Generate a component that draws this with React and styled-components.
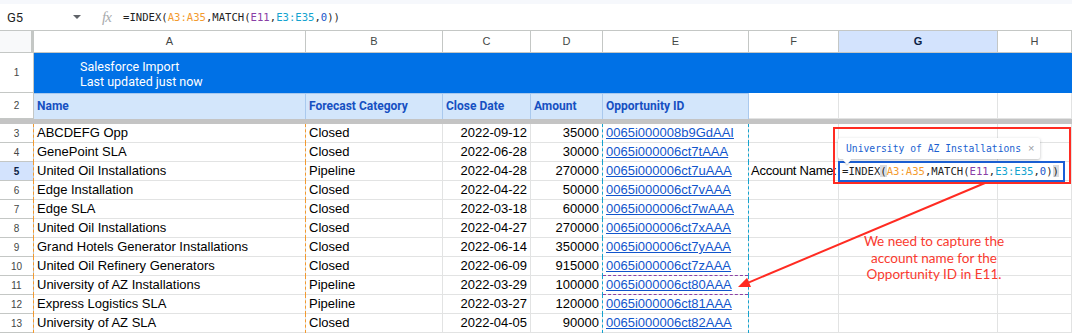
import React from 'react';
import styled, { createGlobalStyle, css } from 'styled-components';

const COLS = '34px 272px 137px 88px 72px 146px 90px 159px 1fr';
const MONO = '"DejaVu Sans Mono", "Liberation Mono", monospace';

const ORANGE = '#f39a2e';
const CYAN = '#13a3cf';
const PURPLE = '#8a3fa6';
const RED = '#ff2b22';

const rows = [
    ['ABCDEFG Opp', 'Closed', '2022-09-12', '35000', '0065i000008b9GdAAI'],
    ['GenePoint SLA', 'Closed', '2022-06-28', '30000', '0065i000006ct7tAAA'],
    ['United Oil Installations', 'Pipeline', '2022-04-28', '270000', '0065i000006ct7uAAA'],
    ['Edge Installation', 'Closed', '2022-04-22', '50000', '0065i000006ct7vAAA'],
    ['Edge SLA', 'Closed', '2022-03-18', '60000', '0065i000006ct7wAAA'],
    ['United Oil Installations', 'Closed', '2022-04-27', '270000', '0065i000006ct7xAAA'],
    ['Grand Hotels Generator Installations', 'Closed', '2022-06-14', '350000', '0065i000006ct7yAAA'],
    ['United Oil Refinery Generators', 'Closed', '2022-06-09', '915000', '0065i000006ct7zAAA'],
    ['University of AZ Installations', 'Pipeline', '2022-03-29', '100000', '0065i000006ct80AAA'],
    ['Express Logistics SLA', 'Pipeline', '2022-03-27', '120000', '0065i000006ct81AAA'],
    ['University of AZ SLA', 'Closed', '2022-04-05', '90000', '0065i000006ct82AAA'],
];

const letters = ['A', 'B', 'C', 'D', 'E', 'F', 'G', 'H'];

const Formula = () => (
    <>
        =INDEX<Paren>(</Paren>
        <Ref $c={ORANGE}>A3:A35</Ref>,MATCH(<Ref $c={PURPLE}>E11</Ref>,<Ref $c={CYAN}>E3:E35</Ref>,
        <Ref $c="#1a56c9">0</Ref>)<Paren>)</Paren>
    </>
);

const BarFormula = () => (
    <>
        =INDEX(<Ref $c={ORANGE}>A3:A35</Ref>,MATCH(<Ref $c={PURPLE}>E11</Ref>,<Ref $c={CYAN}>E3:E35</Ref>,
        <Ref $c="#1a56c9">0</Ref>))
    </>
);

export default function App() {
    return (
        <Page>
            <GlobalStyle />
            <FormulaBar>
                <NameBox>G5</NameBox>
                <Caret />
                <Fx>fx</Fx>
                <BarText>
                    <BarFormula />
                </BarText>
            </FormulaBar>

            <Row $h={22}>
                <Corner />
                {letters.map(l => (
                    <ColHead key={l} $active={l === 'G'}>
                        {l}
                    </ColHead>
                ))}
            </Row>

            <Row $h={40}>
                <RowNum>1</RowNum>
                <Banner>
                    <div>Salesforce Import</div>
                    <div>Last updated just now</div>
                </Banner>
            </Row>

            <Row $h={26}>
                <RowNum>2</RowNum>
                <HeadCell>Name</HeadCell>
                <HeadCell>Forecast Category</HeadCell>
                <HeadCell>Close Date</HeadCell>
                <HeadCell>Amount</HeadCell>
                <HeadCell>Opportunity ID</HeadCell>
                <Cell />
                <Cell />
                <Cell />
            </Row>

            <Freeze />

            {rows.map((r, i) => {
                const n = i + 3;
                return (
                    <Row key={n} $h={19}>
                        <RowNum $active={n === 5}>{n}</RowNum>
                        <Cell $dashL={ORANGE} $dashR={ORANGE}>{r[0]}</Cell>
                        <Cell>{r[1]}</Cell>
                        <Cell $align="right">{r[2]}</Cell>
                        <Cell $align="right">{r[3]}</Cell>
                        <Cell $dashL={CYAN} $dashR={CYAN}>
                            <Link>{r[4]}</Link>
                            {n === 11 && <Marquee />}
                        </Cell>
                        <Cell $tight={n === 5}>{n === 5 ? 'Account Name:' : ''}</Cell>
                        <Cell>
                            {n === 5 && (
                                <Editor>
                                    <Hint>
                                        University of AZ Installations
                                        <Close>×</Close>
                                    </Hint>
                                    <Formula />
                                </Editor>
                            )}
                        </Cell>
                        <Cell />
                    </Row>
                );
            })}

            <Callout />
            <Arrow width="1072" height="333" viewBox="0 0 1072 333">
                <line x1="985" y1="183" x2="749" y2="282.3" stroke={RED} strokeWidth="2" />
                <polygon points="738,287 751,286.9 747.1,277.7" fill={RED} />
            </Arrow>
            <Note>
                We need to capture the
                <br />
                account name for the
                <br />
                Opportunity ID in E11.
            </Note>
        </Page>
    );
}

const GlobalStyle = createGlobalStyle`
    body {
        margin: 0;
        background: #fff;
        font-family: "Liberation Sans", Arial, sans-serif;
        overflow: hidden;
    }
`;

const Page = styled.div`
    position: relative;
    width: 1072px;
    height: 333px;
    overflow: hidden;
`;

const FormulaBar = styled.div`
    box-sizing: border-box;
    height: 31px;
    border-top: 4px solid #f6f8fc;
    border-bottom: 1px solid #c4c7c5;
    display: flex;
    align-items: center;
    padding-left: 7px;
`;

const NameBox = styled.div`
    width: 66px;
    font-family: Roboto, "Liberation Sans", sans-serif;
    font-size: 13px;
    color: #1f1f1f;
`;

const Caret = styled.div`
    width: 0;
    height: 0;
    border-left: 4px solid transparent;
    border-right: 4px solid transparent;
    border-top: 4px solid #5f6368;
    margin-right: 21px;
`;

const Fx = styled.div`
    width: 21px;
    font-family: "Liberation Serif", serif;
    font-style: italic;
    font-size: 15px;
    color: #a8abae;
    letter-spacing: -1px;
`;

const BarText = styled.div`
    font-family: ${MONO};
    font-size: 10.6px;
    color: #1f1f1f;
`;

const Ref = styled.span`
    color: ${p => p.$c};
`;

const Paren = styled.span`
    background: #dadce0;
`;

const Row = styled.div`
    display: grid;
    grid-template-columns: ${COLS};
    height: ${p => p.$h}px;
`;

const Corner = styled.div`
    background: #f8f9fa;
    border-right: 3px solid #c4c7c5;
    border-bottom: 1px solid #c4c7c5;
`;

const ColHead = styled.div`
    box-sizing: border-box;
    border-right: 1px solid #c4c7c5;
    border-bottom: 1px solid #c4c7c5;
    background: ${p => (p.$active ? '#d3e3fd' : '#fff')};
    color: ${p => (p.$active ? '#0b1f45' : '#444746')};
    font-weight: ${p => (p.$active ? 700 : 400)};
    font-size: 11px;
    line-height: 21px;
    text-align: center;
`;

const RowNum = styled.div`
    box-sizing: border-box;
    border-right: 1px solid #c4c7c5;
    border-bottom: 1px solid #c4c7c5;
    background: ${p => (p.$active ? '#d3e3fd' : '#fff')};
    color: ${p => (p.$active ? '#0b1f45' : '#444746')};
    font-weight: ${p => (p.$active ? 700 : 400)};
    font-size: 10px;
    display: flex;
    align-items: center;
    justify-content: center;
`;

const Banner = styled.div`
    grid-column: 2 / -1;
    background: #0071e6;
    color: #fff;
    font-family: Roboto, "Liberation Sans", sans-serif;
    font-size: 12.5px;
    line-height: 15px;
    padding: 6px 0 0 46px;
`;

const HeadCell = styled.div`
    box-sizing: border-box;
    background: #d3e6fb;
    border-right: 1px solid #a9c9ee;
    border-top: 1px solid #a9c9ee;
    color: #1650c2;
    font-family: Roboto, "Liberation Sans", sans-serif;
    font-weight: 700;
    font-size: 12px;
    line-height: 24px;
    padding: 0 3px;
    white-space: nowrap;
`;

const Freeze = styled.div`
    height: 5px;
    background: #c4c4c4;
`;

const Cell = styled.div`
    position: relative;
    box-sizing: border-box;
    border-right: 1px solid #e2e3e3;
    border-bottom: 1px solid #e2e3e3;
    padding: 0 ${p => (p.$tight ? '2px' : '3px')};
    font-size: 13px;
    line-height: 18px;
    letter-spacing: ${p => (p.$tight ? '-0.25px' : 'normal')};
    white-space: nowrap;
    color: #000;
    text-align: ${p => p.$align || 'left'};
    ${p =>
        p.$dashL &&
        css`
            &::before {
                content: '';
                position: absolute;
                left: -1px;
                top: 0;
                bottom: -1px;
                border-left: 1px dashed ${p.$dashL};
            }
        `}
    ${p =>
        p.$dashR &&
        css`
            &::after {
                content: '';
                position: absolute;
                right: -1px;
                top: 0;
                bottom: -1px;
                border-right: 1px dashed ${p.$dashR};
            }
        `}
`;

const Link = styled.span`
    color: #1155cc;
    text-decoration: underline;
`;

const Marquee = styled.div`
    position: absolute;
    left: 0;
    right: 0;
    top: -1px;
    bottom: -1px;
    border-top: 1px dashed ${PURPLE};
    border-bottom: 1px dashed ${PURPLE};
`;

const Editor = styled.div`
    position: absolute;
    left: -1px;
    top: -1px;
    z-index: 3;
    box-sizing: border-box;
    height: 21px;
    border: 2px solid #1a5fd6;
    background: #fff;
    padding: 0 4px 0 2px;
    font-family: ${MONO};
    font-size: 10.6px;
    line-height: 17px;
    color: #1f1f1f;
`;

const Hint = styled.div`
    position: absolute;
    left: -2px;
    bottom: calc(100% + 4px);
    height: 21px;
    box-sizing: border-box;
    padding: 0 6px 0 8px;
    display: flex;
    align-items: center;
    gap: 7px;
    background: #fff;
    border-radius: 2px;
    box-shadow: 0 1px 3px rgba(60, 64, 67, 0.35);
    color: #1a5fd0;
    font-size: 9.7px;

    &::after {
        content: '';
        position: absolute;
        left: 6px;
        bottom: -4px;
        width: 6px;
        height: 6px;
        background: #fff;
        transform: rotate(45deg);
        box-shadow: 1px 1px 1px rgba(60, 64, 67, 0.2);
    }
`;

const Close = styled.span`
    color: #9aa0a6;
    font-family: "Liberation Sans", sans-serif;
    font-size: 11px;
`;

const Callout = styled.div`
    position: absolute;
    left: 833px;
    top: 127px;
    width: 238px;
    height: 57px;
    box-sizing: border-box;
    border: 2px solid ${RED};
    z-index: 5;
`;

const Arrow = styled.svg`
    position: absolute;
    left: 0;
    top: 0;
    z-index: 5;
    pointer-events: none;
`;

const Note = styled.div`
    position: absolute;
    left: 834px;
    top: 233px;
    width: 200px;
    text-align: center;
    font-family: Lato, "Open Sans", sans-serif;
    font-size: 13.5px;
    line-height: 16.5px;
    color: #f93a2f;
    z-index: 5;
`;
